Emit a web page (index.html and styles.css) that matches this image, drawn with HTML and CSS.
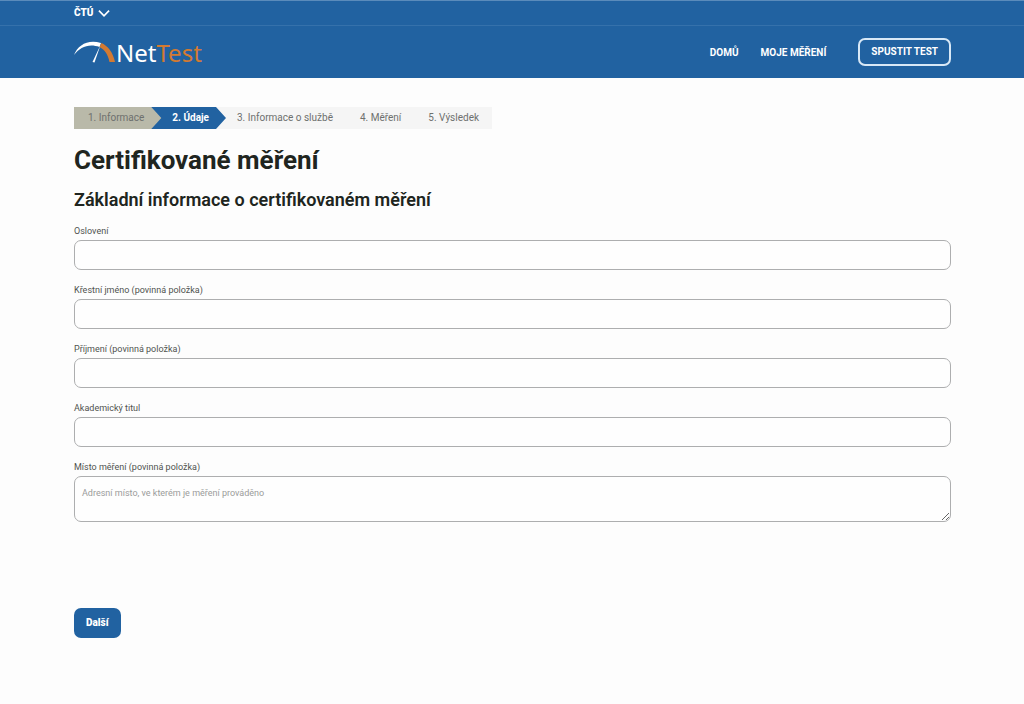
FILE: index.html
```html
<!DOCTYPE html>
<html lang="cs">
<head>
    <meta charset="UTF-8">
    <meta name="viewport" content="width=device-width, initial-scale=1.0">
    <title>NetTest</title>
    <link rel="stylesheet" href="styles.css">
</head>
<body>
    <header class="header">
        <div class="topbar">
            <button type="button" class="topbar-menu">
                ČTÚ
                <svg class="chevron" viewBox="0 0 12 8" aria-hidden="true"><path d="M1.500 1.500 6 6l4.500-4.500"/></svg>
            </button>
        </div>
        <div class="navbar">
            <a href="#" class="logo">
                <svg class="logo-icon" viewBox="0 0 42 24" aria-hidden="true">
                    <path class="logo-white" d="M0 15C4 5 14-1 27 3l-1.500 4C15 3 6 7 0 15z"/>
                    <path class="logo-white" d="M26.500 5 20.500 22.500l-2-.500z"/>
                    <path class="logo-orange" d="M27.500 3C34 6 39 12.500 41 22h-5.500C34 14.500 31 10 25.500 7z"/>
                </svg>
                <span class="logo-text">Net<span class="logo-accent">Test</span></span>
            </a>
            <nav class="nav">
                <a href="#" class="nav-link">DOMŮ</a>
                <a href="#" class="nav-link">MOJE MĚŘENÍ</a>
                <a href="#" class="nav-button">SPUSTIT TEST</a>
            </nav>
        </div>
    </header>

    <main class="content">
        <ol class="steps">
            <li class="step step-done">1. Informace</li>
            <li class="step step-active" aria-current="step">2. Údaje</li>
            <li class="step step-wide">3. Informace o službě</li>
            <li class="step">4. Měření</li>
            <li class="step">5. Výsledek</li>
        </ol>
        <h1>Certifikované měření</h1>
        <h2>Základní informace o certifikovaném měření</h2>
        <form class="form">
            <div class="field">
                <label for="salutation">Oslovení</label>
                <input type="text" id="salutation">
            </div>
            <div class="field">
                <label for="firstName">Křestní jméno (povinná položka)</label>
                <input type="text" id="firstName">
            </div>
            <div class="field">
                <label for="lastName">Příjmení (povinná položka)</label>
                <input type="text" id="lastName">
            </div>
            <div class="field">
                <label for="degree">Akademický titul</label>
                <input type="text" id="degree">
            </div>
            <div class="field">
                <label for="place">Místo měření (povinná položka)</label>
                <textarea id="place" placeholder="Adresní místo, ve kterém je měření prováděno"></textarea>
            </div>
            <button type="button" class="next-button">Další</button>
        </form>
    </main>
</body>
</html>
```
FILE: styles.css
```css
* {
    box-sizing: border-box;
}
body {
    margin: 0;
    font-family: Roboto, "Liberation Sans", sans-serif;
    background: #fdfdfd;
    color: #202520;
}
.header {
    background: #2162a1;
    color: #ffffff;
}
.topbar {
    display: flex;
    align-items: center;
    height: 26px;
    padding: 0 74px;
    border-top: 1px solid #5a8bbb;
    border-bottom: 1px solid #3571ab;
}
.topbar-menu {
    display: flex;
    align-items: center;
    gap: 4px;
    padding: 0;
    border: none;
    background: none;
    color: #ffffff;
    font-family: inherit;
    font-size: 10px;
    font-weight: 900;
    line-height: 16px;
}
.chevron {
    width: 14px;
    height: 9px;
    fill: none;
    stroke: #ffffff;
    stroke-width: 1.5;
}
.navbar {
    display: flex;
    align-items: center;
    justify-content: space-between;
    height: 52px;
    padding: 0 73px 0 74px;
}
.logo {
    display: flex;
    align-items: center;
    color: #ffffff;
    text-decoration: none;
}
.logo-icon {
    width: 42px;
    height: 24px;
}
.logo-white {
    fill: #ffffff;
}
.logo-orange {
    fill: #d37a32;
}
.logo-text {
    padding-top: 2px;
    font-family: "Noto Sans", "Open Sans", sans-serif;
    font-size: 24px;
    line-height: 28px;
}
.logo-accent {
    color: #d37a32;
}
.nav {
    display: flex;
    align-items: center;
    font-size: 10px;
    font-weight: 700;
}
.nav-link {
    margin-right: 22px;
    color: #ffffff;
    text-decoration: none;
}
.nav-button {
    margin-left: 10px;
    padding: 0 11px;
    border: 2px solid #d8e8f6;
    border-radius: 7px;
    color: #ffffff;
    line-height: 24px;
    text-decoration: none;
}
.content {
    padding: 29px 73px 64px 74px;
}
.steps {
    display: flex;
    width: fit-content;
    margin: 0;
    padding: 0;
    list-style: none;
    background: #f5f5f5;
    color: #6e706e;
    font-size: 10px;
    line-height: 22px;
}
.step {
    padding: 0 13px 0 14px;
}
.step-done {
    padding-right: 18px;
    background: #b9b9a9;
}
.step-active {
    margin-left: -11px;
    padding: 0 17px 0 21px;
    background: #2162a1;
    clip-path: polygon(0 0, calc(100% - 10px) 0, 100% 50%, calc(100% - 10px) 100%, 0 100%, 10px 50%);
    color: #ffffff;
    font-weight: 700;
}
.step-wide {
    padding: 0 13px 0 11px;
}
h1 {
    margin: 14px 0 0;
    font-size: 26px;
    font-weight: 700;
    line-height: 34px;
}
h2 {
    margin: 11px 0 0;
    font-size: 18px;
    font-weight: 600;
    line-height: 24px;
}
.form {
    display: flex;
    flex-direction: column;
    align-items: flex-start;
    margin-top: 12px;
}
.field {
    display: flex;
    flex-direction: column;
    gap: 2px;
    width: 100%;
    margin-bottom: 13px;
}
.field label {
    color: #50534f;
    font-size: 9px;
    line-height: 14px;
}
.field input,
.field textarea {
    width: 100%;
    height: 30px;
    padding: 9px 7px;
    border: 1px solid #adaeaf;
    border-radius: 7px;
    background: #fefefe;
    color: #202520;
    font-family: inherit;
    font-size: 9px;
    line-height: 14px;
}
.field textarea {
    height: 46px;
    resize: vertical;
}
.field textarea::placeholder {
    color: #9b9c9b;
}
.next-button {
    margin-top: 73px;
    padding: 0 12px;
    border: none;
    border-radius: 7px;
    background: #2162a1;
    color: #ffffff;
    font-family: inherit;
    font-size: 10px;
    font-weight: 900;
    line-height: 30px;
}
```
